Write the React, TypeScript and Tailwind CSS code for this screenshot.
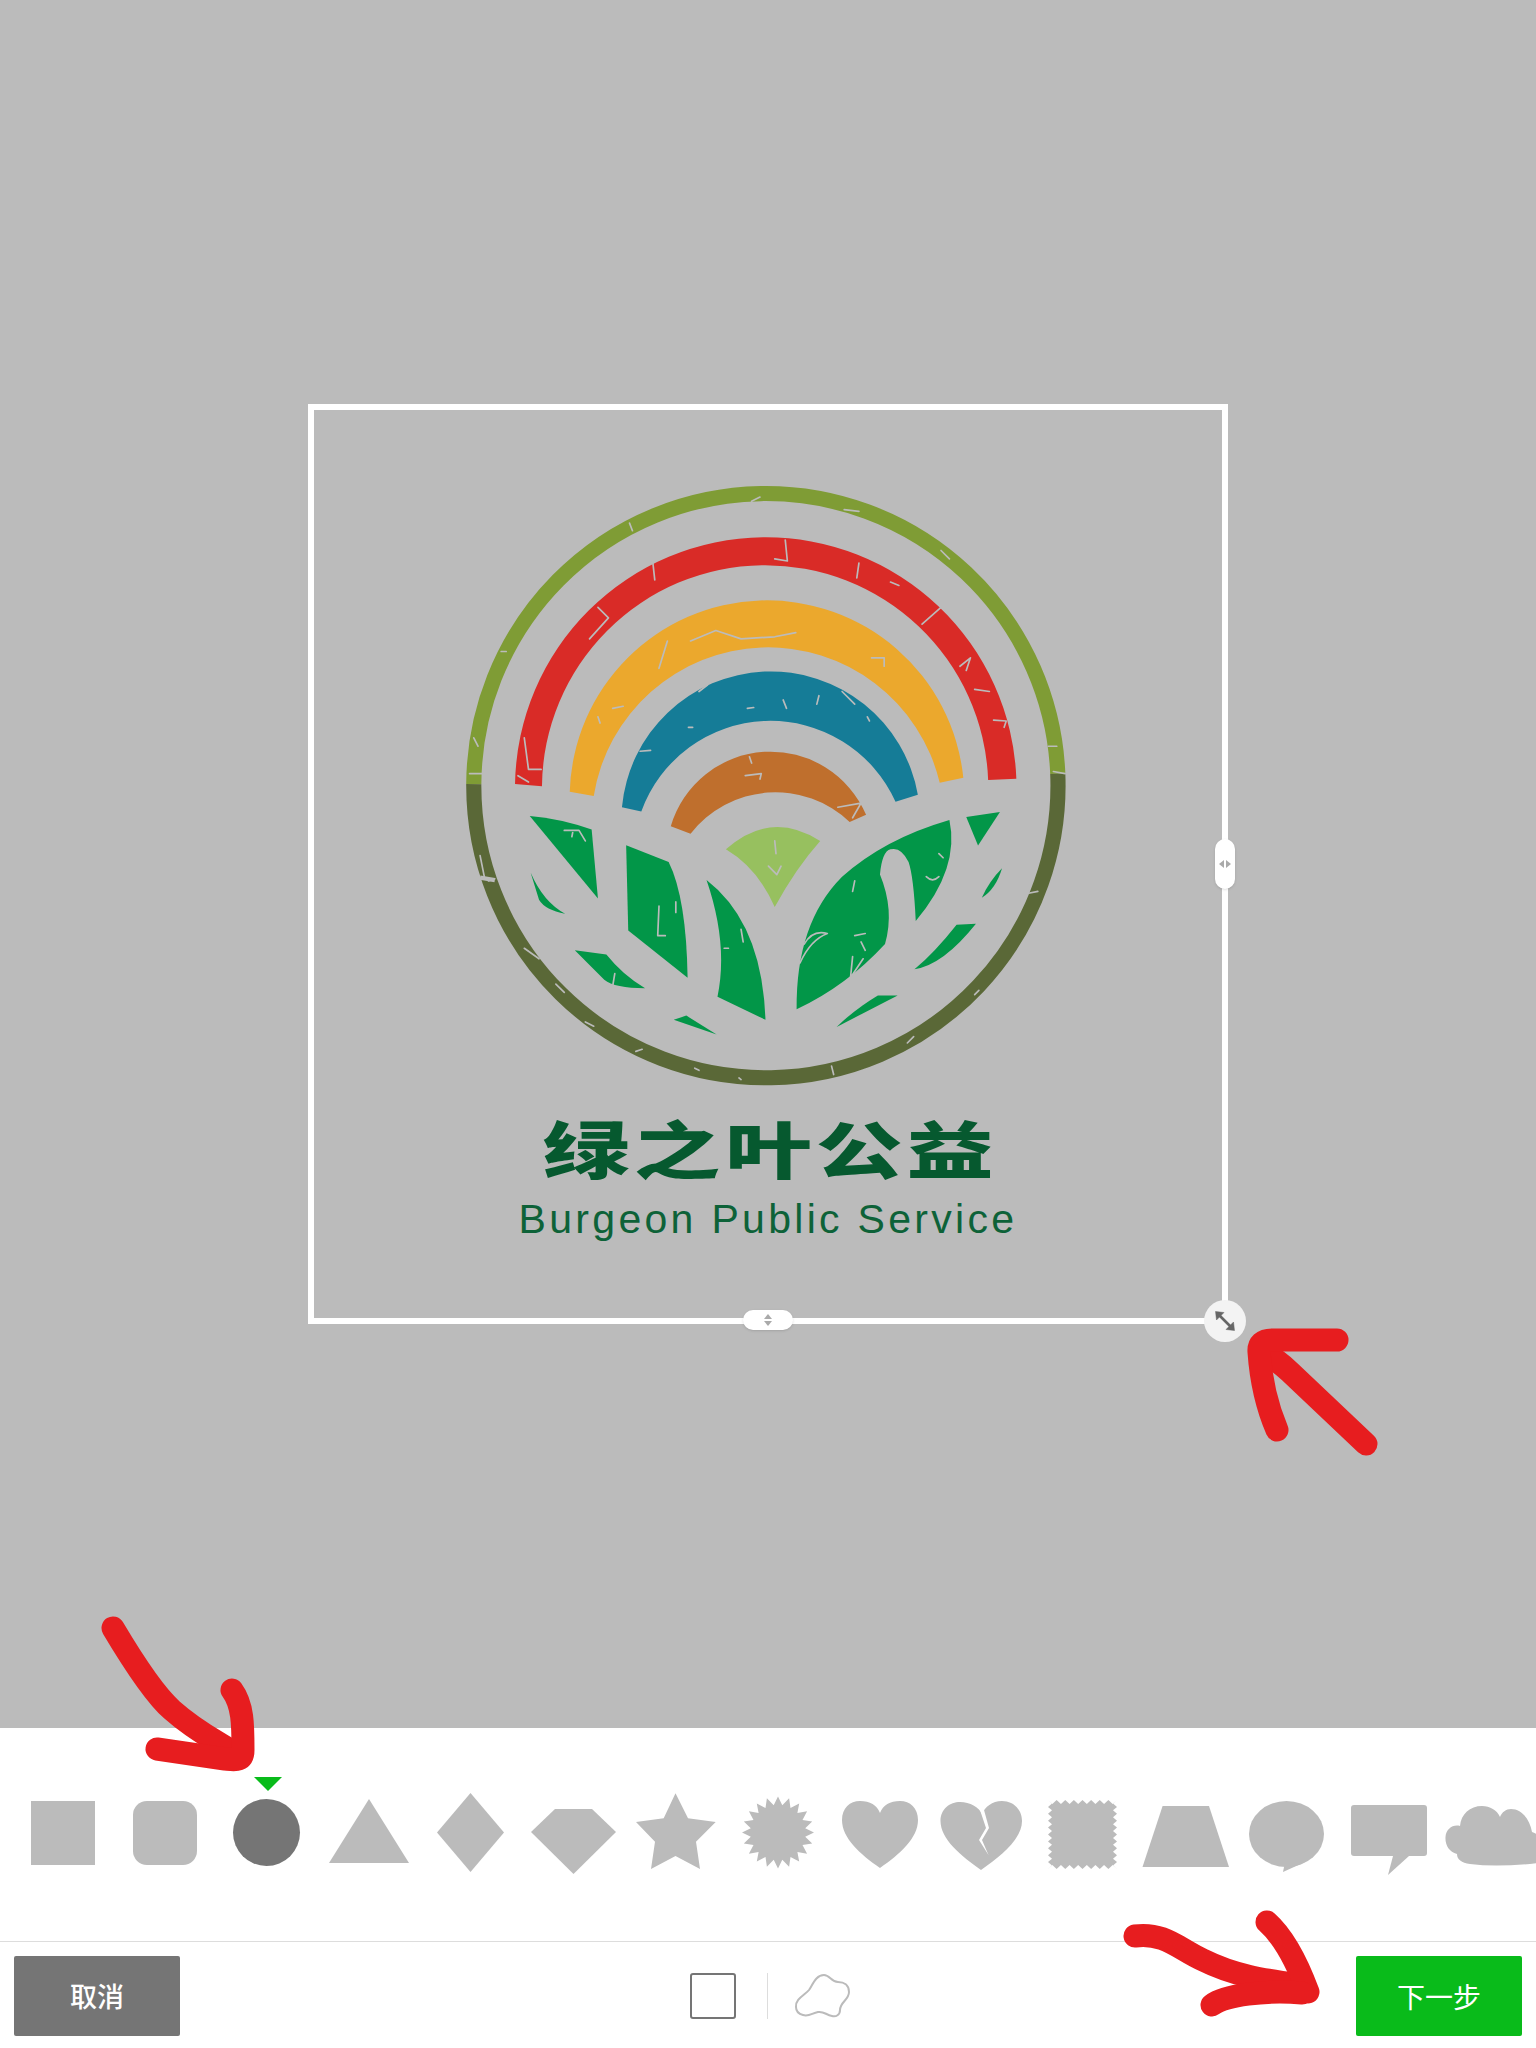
const shapeFill = "#bbbbbb";

// zigzag and burst outlines are generated, too many points to write by hand
function burstPoints(cx: number, cy: number, outer: number, inner: number, count: number) {
  const pts: string[] = [];
  for (let i = 0; i < count * 2; i++) {
    const r = i % 2 === 0 ? outer : inner;
    const a = (Math.PI * i) / count - Math.PI / 2;
    pts.push(`${(cx + r * Math.cos(a)).toFixed(1)},${(cy + r * Math.sin(a)).toFixed(1)}`);
  }
  return pts.join(" ");
}

function stampPoints(x0: number, y0: number, x1: number, y1: number, nx: number, ny: number, d: number) {
  const pts: string[] = [];
  const dx = (x1 - x0) / nx / 2;
  const dy = (y1 - y0) / ny / 2;
  for (let i = 0; i < nx * 2; i++) pts.push(`${x0 + i * dx},${i % 2 ? y0 + d : y0}`);
  for (let i = 0; i < ny * 2; i++) pts.push(`${i % 2 ? x1 - d : x1},${y0 + i * dy}`);
  for (let i = 0; i < nx * 2; i++) pts.push(`${x1 - i * dx},${i % 2 ? y1 - d : y1}`);
  for (let i = 0; i < ny * 2; i++) pts.push(`${i % 2 ? x0 + d : x0},${y1 - i * dy}`);
  return pts.join(" ");
}

const shapes = [
  <rect key="square" x="19" y="11" width="64" height="64" />,
  <rect key="rounded" x="19" y="11" width="64" height="64" rx="14" />,
  <circle key="circle" cx="50.5" cy="42.5" r="33.5" fill="#757575" />,
  <polygon key="triangle" points="51,9 91,73 11,73" />,
  <polygon key="diamond" points="50.5,3 84,42.5 50.5,82 17,42.5" />,
  <polygon key="gem" points="33,19 70,19 94,42 51.5,84 9,42" />,
  <polygon
    key="star"
    points="51.5,3.3 64,28.3 91.7,32 72,51.7 76,79 51.5,66 27,79 31,51.7 12,32 39.7,28.3"
  />,
  <polygon key="burst" points={burstPoints(52, 42.5, 36, 27.5, 20)} />,
  <path
    key="heart"
    d="M52,78 C32,64 14,48 14,30 C14,18 22,11 32,11 C42,11 49,15 52,23 C55,15 62,11 72,11 C82,11 90,18 90,30 C90,48 72,64 52,78Z"
  />,
  <g key="broken">
    <path d="M51,80 C31,66 10.5,49 10.5,31 C10.5,19 20,12 30,12 C40,12 49,17 52,24 C55,17 62,11 72,11 C83,11 92,19 92,31 C92,49 71,66 51,80Z" />
    <polygon points="50,20 56,38 49,50 58.5,65 52,50 59,38 54,20" fill="#ffffff" />
  </g>,
  <polygon key="stamp" points={stampPoints(16, 10, 85, 79, 8, 10, 4)} />,
  <polygon key="trapezoid" points="28.6,16 75,16 95,77 8.5,77" />,
  <g key="bubble">
    <ellipse cx="50.5" cy="44" rx="37.5" ry="33" />
    <polygon points="49,72 47,82 69,72" />
  </g>,
  <g key="square-bubble">
    <rect x="13" y="15" width="76" height="51" rx="3" />
    <polygon points="55,66 50,85 71,66" />
  </g>,
  <path
    key="cloud"
    d="M20,36 C21,24 30,16 42,16 C50,16 57,20 60,27 C62,22 66,19 71,19 C82,19 90,30 92,42 C98,44 106,50 106,60 L106,72 Q60,78 30,74 Q17,72 17,64 C9,62 5,55 5.5,47 C6,39 13,34 20,36 Z"
  />,
];

// small worn marks on top of the logo, same colour as the backdrop
const scratches = [
  "M455,150 L462,168", "M765,88 L745,98", "M965,118 L1000,122", "M1195,215 L1215,235", "M150,455 L162,455",
  "M85,660 L95,680", "M75,745 L105,745", "M1470,680 L1450,680", "M1462,740 L1490,745", "M825,190 L830,240 L800,235",
  "M510,240 L515,285", "M380,350 L405,375 L360,425", "M1000,245 L995,280", "M1075,290 L1095,298", "M1195,350 L1150,390",
  "M1240,490 L1265,470 L1255,500", "M1275,545 L1310,550", "M1320,618 L1350,620 L1345,635", "M205,660 L215,735 L245,735",
  "M190,750 L215,765", "M545,430 L525,495", "M600,430 L660,405 L720,425 L800,420 L850,410", "M1030,470 L1060,470 L1060,490",
  "M415,590 L440,585", "M380,610 L385,625", "M640,535 L620,550", "M735,590 L750,588", "M820,570 L828,590",
  "M905,560 L900,580", "M960,550 L990,580", "M1020,610 L1025,620", "M595,635 L605,635", "M480,692 L505,690",
  "M740,705 L745,720", "M730,750 L768,745 L765,758", "M950,825 L1005,815 L985,850", "M300,880 L335,880 L350,905",
  "M320,885 L318,895", "M525,1060 L522,1130 L540,1130", "M565,1050 L565,1075", "M800,905 L803,935",
  "M785,965 L805,985 L815,965", "M720,1115 L725,1145", "M680,1160 L690,1160", "M990,1000 L985,1025", "M1190,935 L1200,945",
  "M1160,990 Q1175,1005 1190,990", "M870,1150 Q890,1115 925,1125 Q885,1140 860,1195", "M985,1180 L980,1230 L1010,1185",
  "M990,1130 L1015,1125", "M1005,1145 L1015,1165", "M420,1220 L415,1250", "M100,940 L110,990", "M120,1000 L135,995",
  "M205,1160 L240,1185", "M300,1265 L280,1245", "M350,1335 L370,1345", "M470,1405 L485,1400", "M610,1445 L620,1450",
  "M715,1468 L720,1472", "M935,1440 L940,1460", "M1130,1370 L1115,1385", "M1275,1270 L1285,1260", "M1400,1030 L1425,1025",
];

function Logo() {
  return (
    <svg width="660" height="660" viewBox="0 0 1568 1568" className="shrink-0">
      <path d="M85,770 A694,694 0 0 1 1472.4,745" fill="none" stroke="#7f9c35" strokeWidth="36" />
      <path d="M85,770 A694,694 0 1 0 1472.4,745" fill="none" stroke="#5a6837" strokeWidth="36" />
      <line x1="100" y1="992" x2="135" y2="998" stroke="#bbbbbb" strokeWidth="10" />

      <path d="M183,770 A595.75,595.75 0 0 1 1374,757 L1307,760 A530.2,530.2 0 0 0 247,775 Z" fill="#d92b27" />
      <path d="M313,788 A468.8,468.8 0 0 1 1248,755 L1192,767 A419.4,419.4 0 0 0 370,798 Z" fill="#eba82d" />
      <path d="M437,825 A355,355 0 0 1 1140,795 L1087,812 A326,326 0 0 0 483,835 Z" fill="#157c97" />
      <path d="M553,870 A246.9,246.9 0 0 1 1017,843 L978,860 A255.7,255.7 0 0 0 600,888 Z" fill="#bf6f2d" />
      <path d="M684,925 Q790,830 908,905 Q850,970 800,1062 Q760,970 684,925 Z" fill="#97c05f" />

      <g fill="#029648">
        <path d="M218,846 Q290,852 365,878 L380,1042 Z" />
        <path d="M220,980 Q250,1050 302,1078 Q255,1070 240,1045 Z" />
        <path d="M447,915 L548,955 Q590,1040 593,1230 L452,1118 Z" />
        <path d="M638,998 Q770,1100 778,1330 L664,1275 Q690,1150 638,998 Z" />
        <path d="M852,1305 Q850,1100 960,990 Q1060,900 1215,855 Q1240,970 1135,1095 Q1130,990 1118,955 Q1100,918 1075,925 Q1055,930 1050,985 Q1085,1070 1062,1150 Q970,1250 852,1305 Z" />
        <path d="M1255,848 L1335,836 L1283,916 Z" />
        <path d="M1340,970 Q1325,1020 1292,1040 Q1310,1000 1340,970 Z" />
        <path d="M1232,1104 L1278,1102 Q1200,1200 1132,1210 Q1180,1170 1232,1104 Z" />
        <path d="M325,1165 L400,1175 Q440,1225 492,1255 Q420,1255 395,1235 Z" />
        <path d="M1092,1272 L1045,1272 Q990,1305 947,1347 Z" />
        <path d="M560,1330 L590,1320 L662,1365 Z" />
      </g>

      <g fill="none" stroke="#bbbbbb" strokeWidth="4" strokeLinecap="round" strokeLinejoin="round">
        {scratches.map((d) => (
          <path key={d} d={d} />
        ))}
      </g>
    </svg>
  );
}

function Annotations() {
  return (
    <svg
      width="1536"
      height="2048"
      viewBox="0 0 1536 2048"
      className="absolute left-0 top-0 pointer-events-none"
      fill="none"
      stroke="#e71d1f"
      strokeWidth="23"
      strokeLinecap="round"
      strokeLinejoin="round">
      <path d="M1366,1444 L1290,1372 Q1275,1358 1262,1352" />
      <path d="M1337,1340 L1272,1340 Q1258,1340 1259,1352 Q1262,1395 1277,1430" />

      <path d="M113,1628 C135,1665 155,1695 172,1710 C200,1735 225,1745 240,1757" />
      <path d="M232,1690 C243,1705 243,1725 243,1750 C243,1762 235,1760 225,1759 L157,1749" />

      <path d="M1135,1936 C1165,1932 1180,1950 1203,1960 C1235,1976 1265,1980 1300,1985" />
      <path d="M1267,1922 C1285,1938 1298,1965 1308,1992" />
      <path d="M1212,2005 C1225,1995 1265,1990 1302,1993" />
    </svg>
  );
}

export default function App() {
  return (
    <div
      className="relative flex h-[2048px] w-[1536px] flex-col overflow-hidden bg-white"
      style={{ fontFamily: '"Noto Sans CJK SC", "Liberation Sans", sans-serif' }}>
      <div className="flex h-[1728px] items-center justify-center bg-[#bbbbbb]">
        <div className="relative flex h-[920px] w-[920px] flex-col items-center border-[6px] border-white pt-[50px]">
          <Logo />
          <div className="mt-[-4px] flex h-[62px] origin-center scale-x-[1.4] items-center gap-[3px] text-[62px] font-black leading-none text-[#06592f]">
            <span>绿</span>
            <span>之</span>
            <span>叶</span>
            <span>公</span>
            <span>益</span>
          </div>
          <div className="mt-[18px] text-[41px] leading-[46px] tracking-[3.3px] text-[#0d6238] [font-family:'Liberation_Sans',sans-serif]">
            Burgeon Public Service
          </div>

          {/* resize handles */}
          <div className="absolute right-[-13px] top-[429px] flex h-[50px] w-[20px] items-center justify-center gap-[2px] rounded-full bg-white shadow-sm">
            <span className="h-0 w-0 border-y-[4px] border-r-[5px] border-y-transparent border-r-[#aaaaaa]" />
            <span className="h-0 w-0 border-y-[4px] border-l-[5px] border-y-transparent border-l-[#aaaaaa]" />
          </div>
          <div className="absolute bottom-[-12px] left-[429px] flex h-[20px] w-[50px] flex-col items-center justify-center gap-[2px] rounded-full bg-white shadow-sm">
            <span className="h-0 w-0 border-x-[4px] border-b-[5px] border-x-transparent border-b-[#aaaaaa]" />
            <span className="h-0 w-0 border-x-[4px] border-t-[5px] border-x-transparent border-t-[#aaaaaa]" />
          </div>
          <div className="absolute bottom-[-24px] right-[-24px] flex h-[42px] w-[42px] items-center justify-center rounded-full bg-[#f3f3f3]">
            <svg width="22" height="22" viewBox="0 0 22 22" fill="#666666" stroke="#666666">
              <line x1="5" y1="5" x2="17" y2="17" strokeWidth="2.6" />
              <polygon points="1.5,1.5 10,2.5 2.5,10" strokeWidth="0.5" />
              <polygon points="20.5,20.5 12,19.5 19.5,12" strokeWidth="0.5" />
            </svg>
          </div>
        </div>
      </div>

      <div className="h-[213px] overflow-hidden pl-[12px] pt-[62px]">
        <div className="flex w-[1560px]">
          {shapes.map((shape, i) => (
            <div key={i} className="relative h-[90px] w-[102px] shrink-0">
              {i === 2 && (
                <svg width="28" height="14" viewBox="0 0 28 14" className="absolute left-[38px] top-[-13px]">
                  <polygon points="0,0 28,0 14,14" fill="#09bb1a" />
                </svg>
              )}
              <svg width="106" height="90" viewBox="0 0 106 90" fill={shapeFill}>
                {shape}
              </svg>
            </div>
          ))}
        </div>
      </div>

      <div className="flex h-[107px] items-start border-t border-[#dddddd] px-[14px] pt-[14px]">
        <button className="flex h-[80px] w-[166px] items-center justify-center rounded-[2px] bg-[#757575] text-[27px] font-medium text-white">
          取消
        </button>
        <div className="ml-[4px] flex h-[80px] flex-1 items-center justify-center">
          <div className="h-[46px] w-[46px] rounded-[3px] border-[2px] border-[#757575]" />
          <div className="ml-[31px] h-[46px] w-px bg-[#dddddd]" />
          <svg width="56" height="44" viewBox="0 0 56 44" className="ml-[26px]" fill="none" stroke="#bbbbbb" strokeWidth="2">
            <path d="M2,33 C1,25 11,21 15,16 C19,10 22,1 30,1 C36,1 37,8 44,8 C50,8 55,11 55,18 C55,26 46,28 46,36 C46,41 42,43 38,42 C32,41 30,37 24,38 C18,39 15,43 9,41 C5,40 2,37 2,33 Z" />
          </svg>
        </div>
        <button className="flex h-[80px] w-[166px] items-center justify-center rounded-[2px] bg-[#09bb1a] text-[28px] text-white">
          下一步
        </button>
      </div>

      <Annotations />
    </div>
  );
}
